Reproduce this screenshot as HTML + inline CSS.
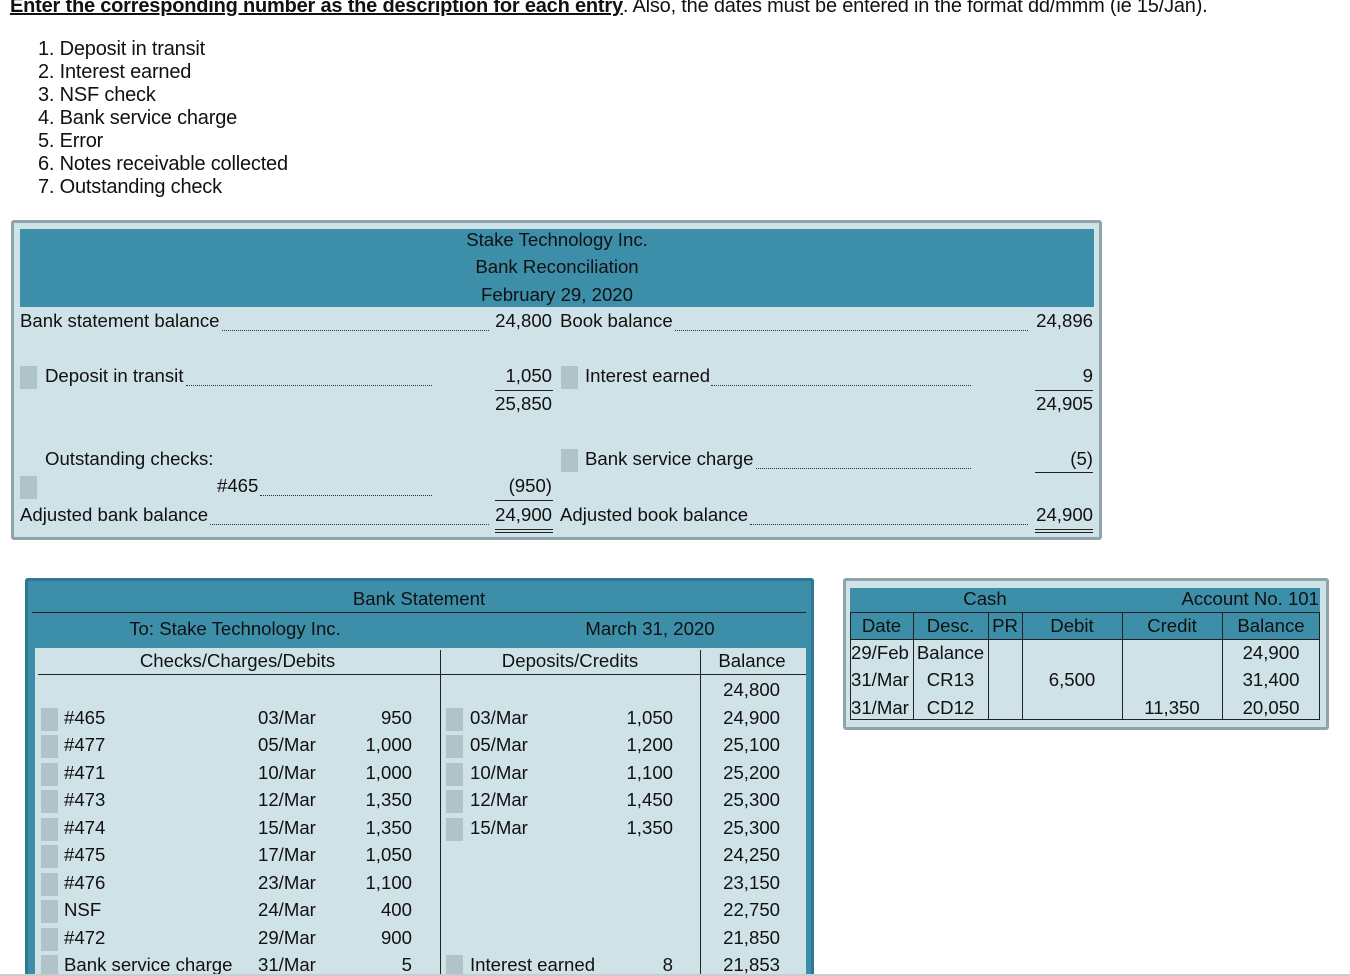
<!DOCTYPE html>
<html><head><meta charset="utf-8"><style>
html,body{margin:0;width:1350px;height:976px;overflow:hidden}
body{background:#fff;font-family:"Liberation Sans",Arial,sans-serif;font-size:18.6px;color:#111;position:relative}
.a{position:absolute;white-space:nowrap;line-height:20px}
.r{position:absolute;white-space:nowrap;line-height:20px;text-align:right}
.c{position:absolute;white-space:nowrap;line-height:20px;text-align:center}
.bx{position:absolute}
.sq{position:absolute;width:17px;height:23px;background:#b0c3c9}
.dot{position:absolute;border-bottom:1px dotted #333;height:0}
.ln{position:absolute;background:#222}
.big{font-size:20px;letter-spacing:-0.2px}
</style></head><body>
<div class="a big" style="left:10px;top:-4px"><b><u>Enter the corresponding number as the description for each entry</u></b>. Also, the dates must be entered in the format dd/mmm (ie 15/Jan).</div>
<div class="a big" style="left:38px;top:39px">1. Deposit in transit</div>
<div class="a big" style="left:38px;top:62px">2. Interest earned</div>
<div class="a big" style="left:38px;top:85px">3. NSF check</div>
<div class="a big" style="left:38px;top:108px">4. Bank service charge</div>
<div class="a big" style="left:38px;top:131px">5. Error</div>
<div class="a big" style="left:38px;top:154px">6. Notes receivable collected</div>
<div class="a big" style="left:38px;top:177px">7. Outstanding check</div>

<!-- Reconciliation -->
<div class="bx" style="left:11px;top:220px;width:1085px;height:314px;border:3px solid #8fa3aa;border-radius:3px;background:#cfe2e8"></div>
<div class="bx" style="left:20px;top:229px;width:1074px;height:78px;background:#3d8fa9"></div>
<div class="c" style="left:20px;width:1074px;top:230px">Stake Technology Inc.</div>
<div class="c" style="left:20px;width:1074px;top:257px">Bank Reconciliation</div>
<div class="c" style="left:20px;width:1074px;top:285px">February 29, 2020</div>

<div class="a" style="left:20px;top:311px">Bank statement balance</div>
<div class="dot" style="left:222px;width:267px;top:330px"></div>
<div class="r" style="right:798px;top:311px">24,800</div>
<div class="a" style="left:560px;top:311px">Book balance</div>
<div class="dot" style="left:675px;width:353px;top:330px"></div>
<div class="r" style="right:257px;top:311px">24,896</div>

<div class="sq" style="left:20px;top:366px"></div>
<div class="a" style="left:45px;top:366px">Deposit in transit</div>
<div class="dot" style="left:186px;width:246px;top:385px"></div>
<div class="r" style="right:798px;top:366px">1,050</div>
<div class="ln" style="left:495px;width:58px;height:1px;top:390px"></div>
<div class="r" style="right:798px;top:394px">25,850</div>
<div class="sq" style="left:561px;top:366px"></div>
<div class="a" style="left:585px;top:366px">Interest earned</div>
<div class="dot" style="left:711px;width:260px;top:385px"></div>
<div class="r" style="right:257px;top:366px">9</div>
<div class="ln" style="left:1035px;width:58px;height:1px;top:390px"></div>
<div class="r" style="right:257px;top:394px">24,905</div>

<div class="a" style="left:45px;top:449px">Outstanding checks:</div>
<div class="sq" style="left:561px;top:449px"></div>
<div class="a" style="left:585px;top:449px">Bank service charge</div>
<div class="dot" style="left:756px;width:215px;top:468px"></div>
<div class="r" style="right:257px;top:449px">(5)</div>
<div class="ln" style="left:1035px;width:58px;height:1px;top:472px"></div>
<div class="sq" style="left:20px;top:476px"></div>
<div class="a" style="left:217px;top:476px">#465</div>
<div class="dot" style="left:260px;width:172px;top:495px"></div>
<div class="r" style="right:798px;top:476px">(950)</div>
<div class="ln" style="left:495px;width:58px;height:1px;top:500px"></div>

<div class="a" style="left:20px;top:505px">Adjusted bank balance</div>
<div class="dot" style="left:210px;width:279px;top:524px"></div>
<div class="r" style="right:798px;top:505px">24,900</div>
<div class="ln" style="left:495px;width:58px;height:1px;top:529px"></div>
<div class="ln" style="left:495px;width:58px;height:1px;top:532px"></div>
<div class="a" style="left:560px;top:505px">Adjusted book balance</div>
<div class="dot" style="left:750px;width:278px;top:524px"></div>
<div class="r" style="right:257px;top:505px">24,900</div>
<div class="ln" style="left:1035px;width:58px;height:1px;top:529px"></div>
<div class="ln" style="left:1035px;width:58px;height:1px;top:532px"></div>

<!-- Bank statement -->
<div class="bx" style="left:25px;top:578px;width:783px;height:398px;border:3px solid #2f7a92;border-bottom:none;border-radius:3px 3px 0 0;background:#3d8fa9"></div>
<div class="bx" style="left:35px;top:648px;width:771px;height:328px;background:#cfe2e8"></div>
<div class="ln" style="left:32px;width:774px;height:1px;top:612px"></div>
<div class="c" style="left:32px;width:774px;top:589px">Bank Statement</div>
<div class="c" style="left:35px;width:400px;top:619px">To: Stake Technology Inc.</div>
<div class="c" style="left:500px;width:300px;top:619px">March 31, 2020</div>
<div class="ln" style="left:440px;width:1px;height:326px;top:650px"></div>
<div class="ln" style="left:700px;width:1px;height:326px;top:650px"></div>
<div class="ln" style="left:38px;width:768px;height:1px;top:674px"></div>
<div class="c" style="left:35px;width:405px;top:651px">Checks/Charges/Debits</div>
<div class="c" style="left:440px;width:260px;top:651px">Deposits/Credits</div>
<div class="c" style="left:700px;width:104px;top:651px">Balance</div>
<div class="r" style="right:570px;top:680px">24,800</div>

<div class="sq" style="left:41px;top:708px"></div><div class="a" style="left:64px;top:708px">#465</div><div class="a" style="left:258px;top:708px">03/Mar</div><div class="r" style="right:938px;top:708px">950</div>
<div class="sq" style="left:41px;top:735px"></div><div class="a" style="left:64px;top:735px">#477</div><div class="a" style="left:258px;top:735px">05/Mar</div><div class="r" style="right:938px;top:735px">1,000</div>
<div class="sq" style="left:41px;top:763px"></div><div class="a" style="left:64px;top:763px">#471</div><div class="a" style="left:258px;top:763px">10/Mar</div><div class="r" style="right:938px;top:763px">1,000</div>
<div class="sq" style="left:41px;top:790px"></div><div class="a" style="left:64px;top:790px">#473</div><div class="a" style="left:258px;top:790px">12/Mar</div><div class="r" style="right:938px;top:790px">1,350</div>
<div class="sq" style="left:41px;top:818px"></div><div class="a" style="left:64px;top:818px">#474</div><div class="a" style="left:258px;top:818px">15/Mar</div><div class="r" style="right:938px;top:818px">1,350</div>
<div class="sq" style="left:41px;top:845px"></div><div class="a" style="left:64px;top:845px">#475</div><div class="a" style="left:258px;top:845px">17/Mar</div><div class="r" style="right:938px;top:845px">1,050</div>
<div class="sq" style="left:41px;top:873px"></div><div class="a" style="left:64px;top:873px">#476</div><div class="a" style="left:258px;top:873px">23/Mar</div><div class="r" style="right:938px;top:873px">1,100</div>
<div class="sq" style="left:41px;top:900px"></div><div class="a" style="left:64px;top:900px">NSF</div><div class="a" style="left:258px;top:900px">24/Mar</div><div class="r" style="right:938px;top:900px">400</div>
<div class="sq" style="left:41px;top:928px"></div><div class="a" style="left:64px;top:928px">#472</div><div class="a" style="left:258px;top:928px">29/Mar</div><div class="r" style="right:938px;top:928px">900</div>
<div class="sq" style="left:41px;top:955px"></div><div class="a" style="left:64px;top:955px">Bank service charge</div><div class="a" style="left:258px;top:955px">31/Mar</div><div class="r" style="right:938px;top:955px">5</div>

<div class="sq" style="left:446px;top:708px"></div><div class="a" style="left:470px;top:708px">03/Mar</div><div class="r" style="right:677px;top:708px">1,050</div>
<div class="sq" style="left:446px;top:735px"></div><div class="a" style="left:470px;top:735px">05/Mar</div><div class="r" style="right:677px;top:735px">1,200</div>
<div class="sq" style="left:446px;top:763px"></div><div class="a" style="left:470px;top:763px">10/Mar</div><div class="r" style="right:677px;top:763px">1,100</div>
<div class="sq" style="left:446px;top:790px"></div><div class="a" style="left:470px;top:790px">12/Mar</div><div class="r" style="right:677px;top:790px">1,450</div>
<div class="sq" style="left:446px;top:818px"></div><div class="a" style="left:470px;top:818px">15/Mar</div><div class="r" style="right:677px;top:818px">1,350</div>
<div class="sq" style="left:446px;top:955px"></div><div class="a" style="left:470px;top:955px">Interest earned</div><div class="r" style="right:677px;top:955px">8</div>

<div class="r" style="right:570px;top:708px">24,900</div>
<div class="r" style="right:570px;top:735px">25,100</div>
<div class="r" style="right:570px;top:763px">25,200</div>
<div class="r" style="right:570px;top:790px">25,300</div>
<div class="r" style="right:570px;top:818px">25,300</div>
<div class="r" style="right:570px;top:845px">24,250</div>
<div class="r" style="right:570px;top:873px">23,150</div>
<div class="r" style="right:570px;top:900px">22,750</div>
<div class="r" style="right:570px;top:928px">21,850</div>
<div class="r" style="right:570px;top:955px">21,853</div>

<!-- Cash account -->
<div class="bx" style="left:843px;top:578px;width:480px;height:146px;border:3px solid #8fa3aa;border-radius:3px;background:#cfe2e8"></div>
<div class="bx" style="left:850px;top:588px;width:470px;height:52px;background:#3d8fa9"></div>
<div class="bx" style="left:850px;top:612px;width:470px;height:108px;border:1px solid #222;box-sizing:border-box"></div>
<div class="ln" style="left:850px;width:470px;height:1px;top:639px"></div>
<div class="ln" style="left:913px;width:1px;height:108px;top:612px"></div>
<div class="ln" style="left:988px;width:1px;height:108px;top:612px"></div>
<div class="ln" style="left:1022px;width:1px;height:108px;top:612px"></div>
<div class="ln" style="left:1122px;width:1px;height:108px;top:612px"></div>
<div class="ln" style="left:1222px;width:1px;height:108px;top:612px"></div>
<div class="c" style="left:850px;width:270px;top:589px">Cash</div>
<div class="r" style="right:31px;top:589px">Account No. 101</div>
<div class="c" style="left:850px;width:63px;top:616px">Date</div>
<div class="c" style="left:913px;width:75px;top:616px">Desc.</div>
<div class="c" style="left:988px;width:34px;top:616px">PR</div>
<div class="c" style="left:1022px;width:100px;top:616px">Debit</div>
<div class="c" style="left:1122px;width:100px;top:616px">Credit</div>
<div class="c" style="left:1222px;width:98px;top:616px">Balance</div>
<div class="a" style="left:851px;top:643px">29/Feb</div><div class="c" style="left:913px;width:75px;top:643px">Balance</div><div class="c" style="left:1222px;width:98px;top:643px">24,900</div>
<div class="a" style="left:851px;top:670px">31/Mar</div><div class="c" style="left:913px;width:75px;top:670px">CR13</div><div class="c" style="left:1022px;width:100px;top:670px">6,500</div><div class="c" style="left:1222px;width:98px;top:670px">31,400</div>
<div class="a" style="left:851px;top:698px">31/Mar</div><div class="c" style="left:913px;width:75px;top:698px">CD12</div><div class="c" style="left:1122px;width:100px;top:698px">11,350</div><div class="c" style="left:1222px;width:98px;top:698px">20,050</div>
<div class="bx" style="left:0;top:974px;width:1350px;height:2px;background:#ccc"></div>
</body></html>
